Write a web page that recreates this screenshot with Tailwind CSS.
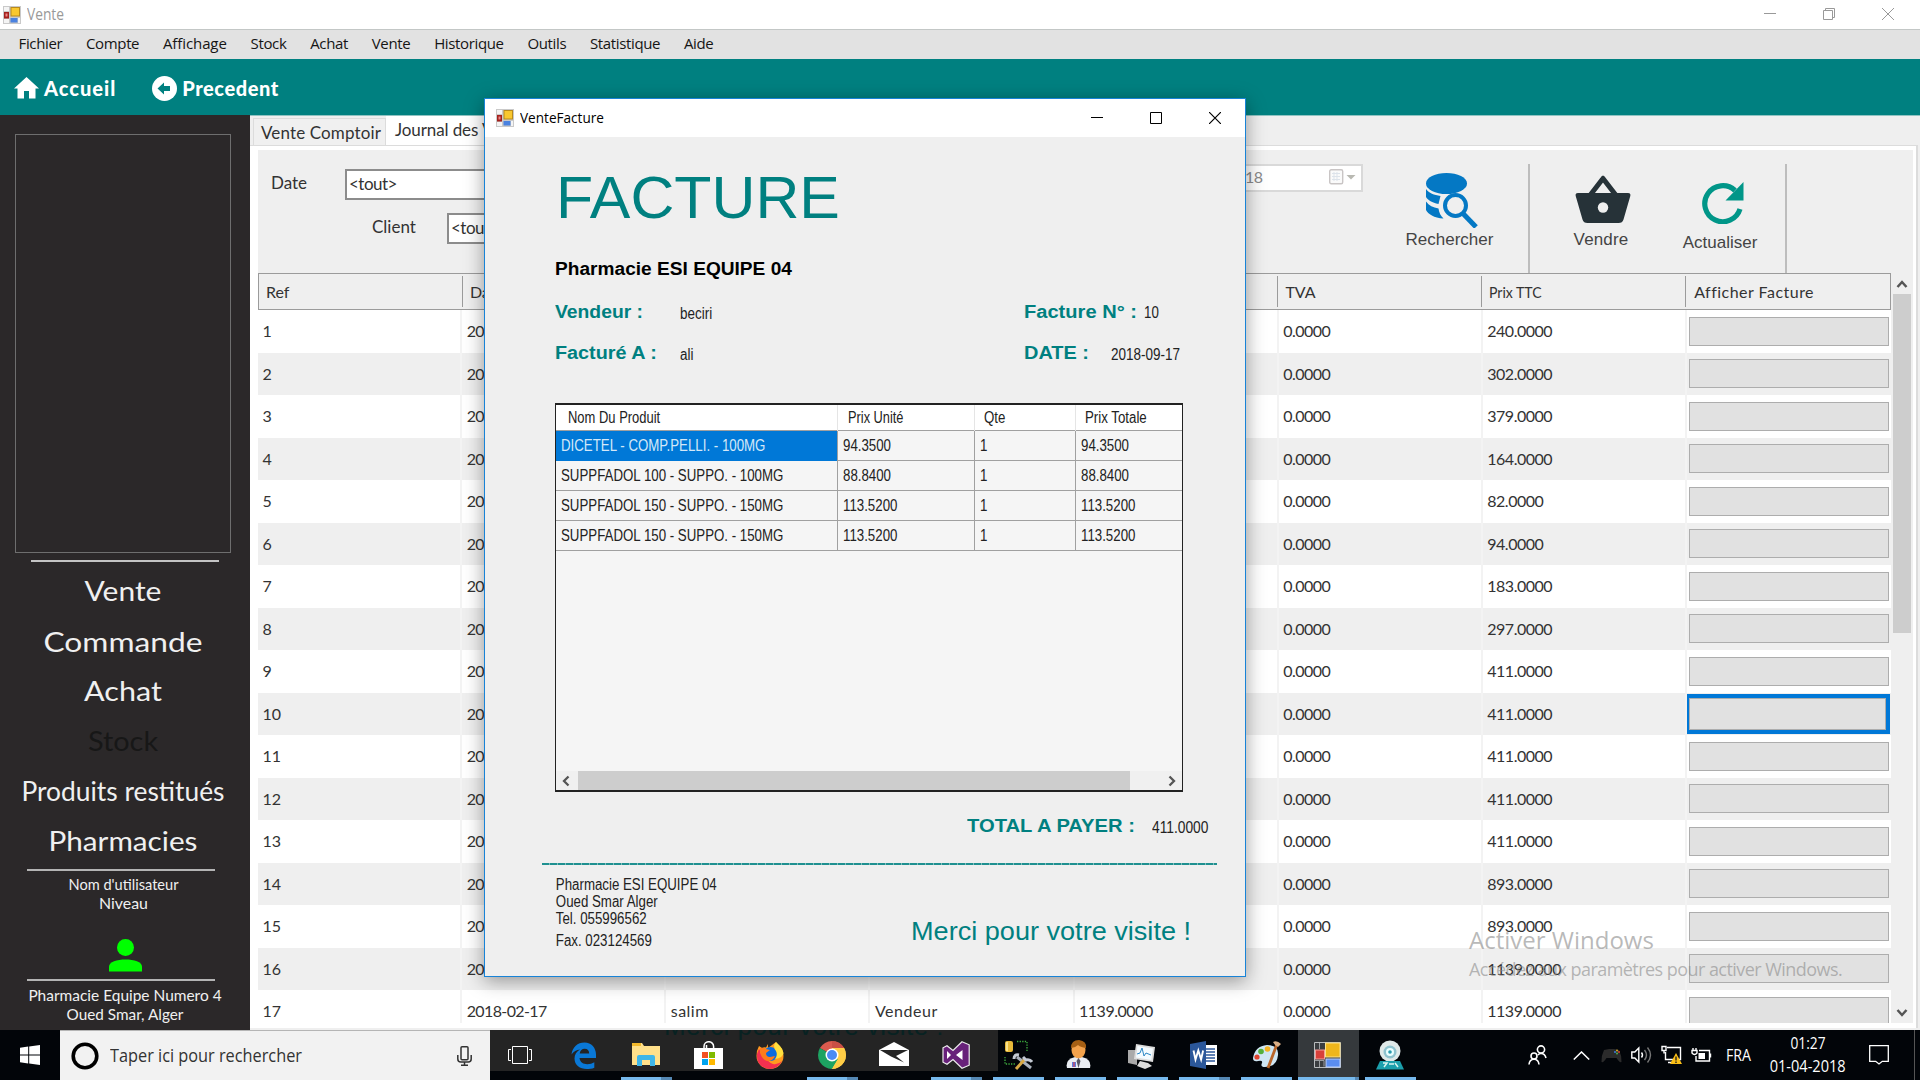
<!DOCTYPE html>
<html lang="fr">
<head>
<meta charset="utf-8">
<title>Vente</title>
<script src="https://cdn.jsdelivr.net/npm/@tailwindcss/browser@4"></script>
</head>
<body class="relative w-[1920px] h-[1080px] overflow-hidden bg-white font-['Lato',sans-serif] text-[#333] whitespace-nowrap">

<svg class="hidden">
  <symbol id="app" viewBox="0 0 18 18">
    <rect width="18" height="18" fill="#c9c9c9"/>
    <path d="M1 1h5v4H1zM1 13h5v4H1zM15 12h2v5h-2z" fill="#f4f4f4"/>
    <rect x="7.5" y="1" width="9.500" height="9.500" fill="#b98a1c"/><rect x="8.500" y="2" width="7.500" height="7.500" fill="#f9c82f"/>
    <rect x="1" y="6" width="5" height="6.500" fill="#a3201c"/><rect x="2.500" y="7.500" width="2" height="3" fill="#e88"/>
    <rect x="7.500" y="12" width="7" height="4.500" fill="#4a82e0"/>
  </symbol>
</svg>

<div class="flex flex-col h-full">
  <!-- title bar -->
  <header class="flex items-center h-[29px] pl-[3px] pr-[26px] bg-white">
    <svg class="size-[18px]"><use href="#app"/></svg>
    <span class="ml-[6px] origin-left scale-x-[.86] text-[16px] leading-[22px] pb-px font-['Open_Sans',sans-serif] text-[#999]">Vente</span>
    <div class="flex items-center gap-[47px] ml-auto pb-px text-[#999]">
      <svg class="w-3 h-3" viewBox="0 0 12 12" stroke="currentColor"><path d="M0 5.500h12"/></svg>
      <svg class="w-3 h-3" viewBox="0 0 12 12" fill="none" stroke="currentColor"><path d="M.5 2.500h9v9h-9zM2.500 2V.5h9v9H10"/></svg>
      <svg class="w-3 h-3" viewBox="0 0 12 12" stroke="currentColor"><path d="M0 0l12 12M12 0L0 12"/></svg>
    </div>
  </header>

  <!-- menu -->
  <nav class="flex items-center h-[30px] pb-[2px] pl-[18.500px] gap-[23.800px] border-t border-[#c3c7c6] bg-[#e2e2e2] text-[15px] tracking-[-.36px] text-[#151515] font-['Open_Sans',sans-serif]">
    <span>Fichier</span><span>Compte</span><span class="tracking-[-.1px]">Affichage</span><span>Stock</span><span>Achat</span><span>Vente</span><span>Historique</span><span>Outils</span><span>Statistique</span><span>Aide</span>
  </nav>

  <!-- navigation -->
  <div class="flex items-center h-14 pt-[2px] pl-[14px] bg-[#008080] text-white font-black text-[20px]">
    <svg class="w-[25px] h-[22px]" viewBox="0 0 25 22" fill="#fff"><path d="M12.500 0L25 11.500h-3.500V21.500h-6.500v-7.500h-5v7.500H3.500V11.500H0z"/></svg>
    <span class="ml-[5px] tracking-[1px]">Accueil</span>
    <svg class="ml-[36px] size-[25px]" viewBox="0 0 25 25"><circle cx="12.500" cy="12.500" r="12.500" fill="#fff"/><path d="M5.500 12.500l6.500-6v3.500h6v5h-6v3.500z" fill="#008080"/></svg>
    <span class="ml-[5px] tracking-[.55px]">Precedent</span>
  </div>

  <div class="flex h-[915px]">
    <!-- sidebar -->
    <aside class="w-[250px] shrink-0 pt-[19px] bg-[#2b2829] text-center text-[#f0f0f0]">
      <div class="ml-[15px] w-[216px] h-[419px] border border-[#6e6e6e]"></div>
      <div class="mt-[7px] ml-[31px] w-[188px] h-[2px] bg-[#c4c4c4]"></div>
      <div class="mt-1 pr-1 text-[27px] leading-[50px]">
        <p class="scale-x-[1.11]">Vente</p>
        <p class="scale-x-[1.175] pt-px -mb-px">Commande</p>
        <p class="scale-x-[1.13]">Achat</p>
        <p class="scale-x-[1.07] text-[#171717]">Stock</p>
        <p class="scale-x-[.976]">Produits restitués</p>
        <p class="scale-x-[1.1]">Pharmacies</p>
      </div>
      <div class="mt-[3px] ml-[27px] w-[188px] h-[2px] bg-[#b4b4b4]"></div>
      <div class="mt-[4px] pr-[3px] text-[15px] leading-[19px]">
        <p class="scale-x-[.973]">Nom d'utilisateur</p>
        <p class="scale-x-[1.06]">Niveau</p>
      </div>
      <svg class="mt-[26px] ml-[108.500px] w-[33px] h-[33px]" viewBox="0 0 33 33" fill="#00ff00"><circle cx="16.500" cy="8.500" r="8.500"/><path d="M0 32.500v-5C0 23 8 20.500 16.500 20.500S33 23 33 27.500v5z"/></svg>
      <div class="mt-[7px] ml-[27px] w-[188px] h-[2px] bg-[#b4b4b4]"></div>
      <div class="mt-[5px] text-[15px] leading-[19px]">
        <p class="scale-x-[1.03]">Pharmacie Equipe Numero 4</p>
        <p class="scale-x-[1.02]">Oued Smar, Alger</p>
      </div>
    </aside>

    <!-- tabs and their page -->
    <main class="flex flex-col w-[1670px] bg-[#efefef]">
      <div class="flex h-[30px] shrink-0 text-[17px] border-t border-[#8fc3c2]">
        <div class="mt-[2px] ml-[3px] w-[133px] h-7 pl-[7px] leading-[27px] border border-[#dcdcdc] bg-[#f0f0f0] tracking-[.13px]">Vente Comptoir</div>
        <div class="w-[98px] h-8 pl-[9px] leading-[28px] bg-white tracking-[-.1px]">Journal des V</div>
      </div>
      <div class="flex flex-col h-[883px] mr-[2px] pl-[8px] pr-[3px] pt-1 pb-[5px] border-t border-r-2 border-[#dcdcdc] bg-white">
        <div class="flex flex-col h-[873px] bg-[#efefef]">
          <!-- filters -->
          <div class="flex h-[123px] shrink-0 text-[17px]">
            <div class="w-[226px] pl-[13px] pt-[19px]">
              <div class="flex h-[31px] items-center">
                <span class="w-[74px] shrink-0 leading-[26px] pb-[3px]">Date</span>
                <div class="grow h-full pl-[2px] leading-[26px] border-2 border-r-0 border-[#8c8c8c] bg-white tracking-[-.5px]">&lt;tout&gt;</div>
              </div>
              <div class="flex h-[31px] mt-[13px] pl-[101px] items-center">
                <span class="w-[75px] shrink-0 leading-[26px] pb-[3px]">Client</span>
                <div class="grow h-full pl-[2px] leading-[26px] border-2 border-r-0 border-[#8c8c8c] bg-white tracking-[-.5px]">&lt;tou</div>
              </div>
            </div>
            <div class="flex items-center ml-[736px] mt-[14px] w-[143px] h-7 pb-[2px] pl-[23px] pr-[4px] border-2 border-[#d9d9d9] bg-white text-[16px] tracking-[-.5px] text-[#8a8a8a]">18
              <svg class="ml-auto w-[28px] h-[16px]" viewBox="0 0 28 16"><rect x=".7" y=".7" width="13" height="14" rx="1.500" fill="#fafafa" stroke="#c9c5c5" stroke-width="1.400"/><path d="M3 4.500h8M3 7.500h8M3 10.500h8M5 3v9M8 3v9" stroke="#dde3ea"/><path d="M17.500 6h9l-4.500 4.500z" fill="#b9b9b2"/></svg>
            </div>
            <div class="flex flex-col items-center ml-[25px] mt-[14px] w-[142px] pt-[8px] border-r-2 border-[#bdbdbd] pr-[17px] font-['Liberation_Sans',sans-serif] text-[#444]">
              <svg class="ml-[5px] w-[52px] h-[56px]" viewBox="0 0 52 56" fill="#0478c4"><ellipse cx="20.500" cy="11.500" rx="20.500" ry="10.500"/><path d="M0 17c3 4 8 6 14.500 7l-2 8C6 30.500 2 28.500 0 25z"/><path d="M0 29.500c3 4 7 6 12.500 7 .5 4 2 7 5 10C8 46 2 42 0 38z"/><circle cx="29.500" cy="33.500" r="10.500" fill="#efefef" stroke="#0478c4" stroke-width="4"/><path d="M36.500 41l13.500 14" stroke="#0478c4" stroke-width="5"/></svg>
              <span class="mt-px leading-[22px]">Rechercher</span>
            </div>
            <div class="flex mt-[14px] w-[257px] border-r-2 border-[#bdbdbd] font-['Liberation_Sans',sans-serif] text-[#444]">
              <div class="flex flex-col items-center ml-[40px] w-[62px] pt-[11px]">
                <svg class="w-[56px] h-[48px] ml-[4px]" viewBox="0 0 56 48"><path d="M28 3.500L14.500 21M28 3.500L41.500 21" stroke="#263238" stroke-width="5" stroke-linecap="round"/><path d="M3 18h50q3 0 2.300 3L48.500 44.500q-1 3.500-5 3.500h-31q-4 0-5-3.500L.7 21Q0 18 3 18z" fill="#263238"/><circle cx="28" cy="32.500" r="5.200" fill="#efefef"/></svg>
                <span class="mt-[6px] leading-[22px] tracking-[.15px]">Vendre</span>
              </div>
              <div class="flex flex-col items-center ml-[48px] w-[80px] pt-[18px]">
                <svg class="w-[42px] h-[42px] ml-[6px]" viewBox="0 0 42 42" fill="none"><path d="M33 8.500A18 18 0 1 0 38 27" stroke="#009688" stroke-width="5.200"/><path d="M41.500 0v18.500H23.500z" fill="#009688"/></svg>
                <span class="mt-[8px] leading-[22px]">Actualiser</span>
              </div>
            </div>
          </div>

          <!-- sales grid -->
          <div class="flex h-[750px]">
            <div class="w-[1633px] shrink-0 overflow-hidden">
              <div id="head" class="grid grid-cols-8 h-[37px] border border-[#9b9b9b] text-[16px]"></div>
              <div id="rows" class="h-[713px] overflow-hidden text-[16px]"></div>
            </div>
            <div class="flex flex-col items-center w-[20px] ml-[1px] pt-[7px] pb-[6px]">
              <svg class="w-[12px] h-[8px] shrink-0" viewBox="0 0 12 8" fill="none" stroke="#555" stroke-width="2.500"><path d="M1.500 7L6 2l4.500 5"/></svg>
              <div class="mt-[6px] w-[18px] h-[339px] bg-[#cdcdcd]"></div>
              <svg class="mt-auto w-[12px] h-[8px] shrink-0" viewBox="0 0 12 8" fill="none" stroke="#555" stroke-width="2.500"><path d="M1.500 1L6 6l4.500-5"/></svg>
            </div>
          </div>
        </div>
      </div>
    </main>
  </div>

  <!-- taskbar -->
  <footer class="relative flex h-[50px] bg-[#020509] text-white overflow-hidden font-['Open_Sans',sans-serif]">
    <div class="flex items-center justify-center w-[60px]">
      <svg class="w-5 h-5" viewBox="0 0 20 20" fill="#fff"><path d="M0 2.700l8.200-1.200v8H0zM9.200 1.400L20 0v9.500H9.200zM0 10.500h8.200v8L0 17.300zM9.200 10.500H20V20L9.200 18.600z"/></svg>
    </div>
    <div class="flex items-center w-[430px] pl-[11px] pr-[18px] border-t border-[#b5b5b5] bg-[#f2f2f2]">
      <svg class="w-7 h-7" viewBox="0 0 28 28"><circle cx="14" cy="14" r="11.800" fill="none" stroke="#000" stroke-width="3.600"/></svg>
      <span class="ml-[11px] text-[18px] origin-left scale-x-[.905] text-[#333]">Taper ici pour rechercher</span>
      <svg class="ml-auto w-[15px] h-5" viewBox="0 0 15 20" fill="none" stroke="#333" stroke-width="1.500"><rect x="4" y=".8" width="7" height="13" rx="1"/><path d="M.8 9v4q0 3 3 3h7.400q3 0 3-3V9M7.500 16v3M4 19.200h7"/></svg>
    </div>
    <div class="relative flex w-[508px] shrink-0 h-[41px] bg-[#242424]">
      <span class="absolute left-[174px] top-[-19px] text-[26px] leading-[30px] tracking-[.45px] text-[#082222] font-['Liberation_Sans',sans-serif]">Merci pour votre visite !</span>
      <div class="relative flex">
        <div class="flex justify-center w-[63px] h-[50px] pt-[15px] pr-[3px]"><svg class="w-6 h-5" viewBox="0 0 24 20" fill="none" stroke="#fff"><path d="M4.500 1.500h15v17h-15zM3 4.500H.5v11H3M21 4.500h2.500v11H21"/></svg></div>
        <div class="flex justify-center w-[62px] h-[50px] pt-[12px]"><svg class="w-[26px] h-[27px]" viewBox="0 0 26 27"><path d="M.5 12.500C1.500 5 6.500.5 13.500.5 20.500.5 25 6 25 12.500v3.500H8.500c.5 4.500 4 6.200 7.800 6.200 2.700 0 5-.7 7-2v5.500c-2.300 1-5 1.300-7.600 1.300C9 27 3.500 23 3.500 16.500c0-4 2-7 5.500-9C5.500 8 2.500 9.500.5 12.500zM8.700 11.500h9.500c0-3-1.700-4.700-4.600-4.700-2.600 0-4.500 1.700-4.900 4.700z" fill="#0a78d6"/></svg></div>
        <div class="flex justify-center w-[62px] h-[50px] pt-[13px]"><svg class="w-7 h-6" viewBox="0 0 28 24"><path d="M0 0h10l2 3h16v19H0z" fill="#ffe08a"/><path d="M0 0h9v3H0z" fill="#f3b92c"/><path d="M5 23V14q0-2 2-2h14q2 0 2 2v9h-5v-6h-8v6z" fill="#3fb6e8"/></svg></div>
        <div class="flex justify-center w-[62px] h-[50px] pt-[11px]"><svg class="w-[29px] h-[28px]" viewBox="0 0 29 28"><path d="M10 8V5.500a4.800 4.800 0 0 1 9.600 0V8M12.500 8V4" stroke="#fff" stroke-width="1.500" fill="none"/><path d="M0 7h29v21H0z" fill="#fff"/><path d="M8 11h6v6H8z" fill="#f25022"/><path d="M15 11h6v6h-6z" fill="#7fba00"/><path d="M8 18h6v6H8z" fill="#00a4ef"/><path d="M15 18h6v6h-6z" fill="#ffb900"/></svg></div>
        <div class="flex justify-center w-[62px] h-[50px] pt-[11px]"><svg class="w-7 h-7" viewBox="0 0 28 28"><path d="M3 5l3 2q2-1 4-.5L12 3v4l8-6q1.500 2 3.500 4 4 4 4 10a13.500 13 0 0 1-27 0Q.5 9 3 5z" fill="#ff9a1f"/><path d="M1 13Q0 26 13 28q9 0 13-8-4 4-9 3T3 8z" fill="#f3304f"/><circle cx="14.500" cy="13" r="7" fill="#0a6be0"/><path d="M20 1q-4 4 0 9 2 4-1 8 8-1 8.500-6Q27 8 24 5z" fill="#ffdf3e"/><path d="M4 7q4-1 6 1l4 1-4 3q0 4 4 4l5-1q-2 5-7 5T4 12z" fill="#ff7c1a"/></svg></div>
        <div class="flex justify-center w-[62px] h-[50px] pt-[11px]"><svg class="w-7 h-7" viewBox="0 0 28 28"><path d="M14 14L1.900 7A14 14 0 0 1 26.100 7z" fill="#db5a4e"/><path d="M14 14V0A14 14 0 0 1 26.100 7z" fill="#c94f45"/><path d="M14 14L1.900 7A14 14 0 0 0 14 28z" fill="#1da362"/><path d="M14 14h-2l2 14A14 14 0 0 0 26.100 7H14z" fill="#ffcd46"/><path d="M7 17L14 28l6-10z" fill="#1da362"/><path d="M14 28l6-10 4-11h2.100A14 14 0 0 1 14 28z" fill="#ffcd46"/><circle cx="14" cy="14" r="6.500" fill="#fff"/><circle cx="14" cy="14" r="5" fill="#4a8af4"/></svg></div>
        <div class="flex justify-center w-[62px] h-[50px] pt-[12px]"><svg class="w-[30px] h-6" viewBox="0 0 30 24"><path d="M0 8L15 0l15 8v16H0z" fill="#fff"/><path d="M1 8h28l-12 6 8 6.500L12 14.500z" fill="#242424"/></svg></div>
        <div class="flex justify-center w-[62px] h-[50px] pt-[11px]"><svg class="w-7 h-7" viewBox="0 0 28 28"><path d="M20 .8l7.200 3v20.400l-7.200 3-9-8.700-6 4.700-4-2V6.800l4-2 6 4.700z" fill="#68217a" stroke="#eee" stroke-width="1.200"/><path d="M5 10v8l4-4zM20.500 9v10L14 14z" fill="#fff"/></svg></div>
      </div>
    </div>
    <div class="flex">
      <div class="flex justify-center w-[41px] pt-[10px]"><svg class="w-[29px] h-[30px]" viewBox="0 0 29 30"><rect x="1" y="1" width="8" height="11" rx="2" fill="#e7b93a"/><path d="M3 2v9" stroke="#fff0a8" stroke-width="1.500"/><path d="M13 1.500h10v10M1 17v7h11" fill="none" stroke="#3fae3f" stroke-width="1.300" stroke-dasharray="1.300 1.300"/><path d="M13 17l14 11" stroke="#a9b0bb" stroke-width="3"/><path d="M10 19q0-5 5-4" stroke="#c4cad4" stroke-width="3" fill="none"/><path d="M12 29l9-10" stroke="#d9a945" stroke-width="3"/><path d="M19 17l3 3q4-1 6 2" stroke="#c4cad4" stroke-width="3" fill="none"/></svg></div>
      <div class="flex justify-center w-[82px] pt-[10px] pr-[3px]"><svg class="w-[25px] h-[29px]" viewBox="0 0 25 29"><path d="M1 28q-2-9 8-11h7q10 2 8 11z" fill="#e9ecf2"/><ellipse cx="12.500" cy="10" rx="7" ry="8.500" fill="#f3a24c"/><path d="M5 8Q5 0 13 0q8 1 7 8-6-1-8-3-3 3-7 3z" fill="#a55f14"/><path d="M12.500 18l-2 3 2 7 2-7z" fill="#556"/><path d="M6 22h4v5H6z" fill="#5b7de0"/><path d="M8 22v5" stroke="#e33"/></svg></div>
      <div class="flex justify-center w-[42px] pt-[14px] pr-[3px]"><svg class="w-[28px] h-[25px]" viewBox="0 0 28 25"><path d="M1 6h9v15l-9-2z" fill="#aaa"/><path d="M9 0l19 3-2 15-19-3z" fill="#dcdcdc"/><path d="M10.500 2l15.500 2.500-1.700 11.500L9 13.500z" fill="#f4fbff"/><path d="M10 10l3-1 2-5 2 8 2-3 5 2" stroke="#2a86c4" fill="none"/><path d="M13 17l8 2 4 3-7 3-8-3z" fill="#ddd"/></svg></div>
      <div class="flex justify-center w-[82px] pt-[11px]"><svg class="w-[28px] h-[28px]" viewBox="0 0 28 28"><path d="M14 4h13v20H14z" fill="#fff"/><path d="M16 8h9M16 11h9M16 14h9M16 17h9M16 20h9" stroke="#2b579a" stroke-width="1.300"/><path d="M0 3l16-3v28L0 25z" fill="#2b579a"/><path d="M3.500 9.500l2 9 2.800-9 2.800 9 2-9" stroke="#fff" stroke-width="1.900" fill="none"/></svg></div>
      <div class="flex justify-center w-[42px] pt-[10px]"><svg class="w-[30px] h-[30px]" viewBox="0 0 30 30"><path d="M2 18Q4 6 16 5q12 0 11 10-1 12-13 12-5 0-3-4 1-3-4-2-5 1-5-3z" fill="#cfe6f4"/><circle cx="6" cy="17" r="2.600" fill="#e2452f"/><circle cx="10" cy="11.500" r="2.800" fill="#54b03c"/><circle cx="16.500" cy="9" r="2.800" fill="#f5b324"/><path d="M26 4L17 28" stroke="#b8652a" stroke-width="2.800"/><path d="M22 2q4-2 8 2l-3 3q-3-1-5-5z" fill="#d9ae86"/></svg></div>
      <div class="flex justify-center w-[61px] ml-[11px] pt-[12px] pr-[2px] bg-[#35393c]"><svg class="w-[27px] h-[26px]" viewBox="0 0 27 26"><path d="M.5.5h26v25H.5z" fill="#3a3d40" stroke="#b9bcbe"/><rect x="11.500" y="1" width="14.500" height="14" fill="#efb61c" stroke="#fbe28b"/><rect x="1.500" y="8" width="9" height="9" fill="#d9403a" stroke="#f2a09b"/><rect x="12" y="17" width="14" height="8" fill="#5a8df0" stroke="#bcd0fa"/><path d="M5.500 1v6M5.500 18v7M1 18.500h9v6" stroke="#9a9da0" fill="none"/></svg></div>
      <div class="flex justify-center w-[62px] pt-[10px]"><svg class="w-[30px] h-[30px]" viewBox="0 0 30 30"><circle cx="15" cy="11" r="10.500" fill="#dfe9e8"/><circle cx="15" cy="12" r="6.500" fill="#8fc4cf"/><circle cx="15" cy="12" r="4" fill="#eaffff"/><circle cx="15" cy="12" r="1.800" fill="#2a9cae"/><path d="M5 21h20l4 8.500H1z" fill="#1b9fac"/><path d="M8 23h4l-3 4M14 24h5M20 23l3 4" stroke="#d6f4f0" stroke-width="1.500" fill="none"/></svg></div>
    </div>
    <!-- running indicators -->
    <div class="absolute left-[621px] bottom-0 flex h-[3px]">
      <i class="w-10 bg-[#76b9ed]"></i><i class="w-[11px] bg-[#5588b4]"></i>
      <i class="ml-[135px] w-10 bg-[#76b9ed]"></i><i class="w-[11px] bg-[#5588b4]"></i>
      <i class="ml-[73px] w-10 bg-[#76b9ed]"></i><i class="w-[11px] bg-[#5588b4]"></i>
      <i class="ml-[11px] w-[51px] bg-[#76b9ed]"></i><i class="ml-[11px] w-[51px] bg-[#76b9ed]"></i><i class="ml-[11px] w-[51px] bg-[#76b9ed]"></i>
      <i class="ml-[11px] w-10 bg-[#76b9ed]"></i><i class="w-[11px] bg-[#5588b4]"></i>
      <i class="ml-[11px] w-[51px] bg-[#76b9ed]"></i>
      <i class="ml-[6px] w-[57px] bg-[#76b9ed]"></i><i class="w-[4px] bg-[#5588b4]"></i>
      <i class="ml-[6px] w-[51px] bg-[#76b9ed]"></i>
    </div>
    <!-- tray -->
    <div class="flex items-center ml-auto h-full pr-[5px] text-[16px]">
      <svg class="w-[19px] h-5" viewBox="0 0 19 20" fill="none" stroke="#fff" stroke-width="1.600"><circle cx="13" cy="4.500" r="3.600"/><path d="M18 13q-1-4.500-5-4.500-2 0-3 1.500"/><circle cx="6" cy="11" r="3"/><path d="M1 19.500q.5-5.300 5-5.300t5 5.300"/></svg>
      <svg class="ml-[26px] w-[17px] h-[9px]" viewBox="0 0 17 9" fill="none" stroke="#fff" stroke-width="1.500"><path d="M.8 8.500l7.700-7.500 7.700 7.500"/></svg>
      <svg class="ml-[11px] w-[21px] h-[15px]" viewBox="0 0 21 15"><path d="M3 2l5-1h5l5 1q3 6 2.500 12-2 1-5-4h-10q-3 5-5 4Q0 8 3 2z" fill="#2b2b2b"/><circle cx="14" cy="4" r="1" fill="#3b7de0"/><circle cx="16" cy="2.500" r="1" fill="#e0b020"/><circle cx="18" cy="4" r="1" fill="#d84030"/><circle cx="16" cy="5.500" r="1" fill="#4caf50"/></svg>
      <svg class="ml-[9px] w-[21px] h-[18px]" viewBox="0 0 21 18" fill="none" stroke="#fff" stroke-width="1.400"><path d="M.8 6h3l4-4v14l-4-4h-3z"/><path d="M10.500 6.500q2 2.500 0 5"/><path d="M13.500 4q4 5 0 10M16.500 1.500q6 7.500 0 15" stroke="#777"/></svg>
      <svg class="ml-[9px] w-[21px] h-5" viewBox="0 0 21 20" fill="none" stroke="#fff" stroke-width="1.400"><path d="M6 2.500h13.500v12H4.500V7M1 1.500h4v4H1zM3 5.500v3M7 17.500h5"/><path d="M15 8l6 11H9z" fill="#fbbf16" stroke="none"/><path d="M15 11.500v4M15 16.500v1.500" stroke="#222"/></svg>
      <svg class="ml-[9px] w-[21px] h-[16px]" viewBox="0 0 21 16" fill="none" stroke="#fff" stroke-width="1.400"><path d="M8 3.500h10.500v10.500H5V9M19.500 6.500v4"/><path d="M7.500 6h6.500v6H7.500z" fill="#fff" stroke="none"/><path d="M1 3.500h5v2.500q-2.500 3-5 0zM2 1v2M5 1v2"/></svg>
      <span class="ml-[14px] w-[25px]"><span class="inline-block origin-left scale-x-[.885]">FRA</span></span>
      <div class="ml-[18px] w-[78px] text-center leading-[23px]">
        <p class="scale-x-[.86]">01:27</p><p class="ml-[-3px] scale-x-[.91]">01-04-2018</p>
      </div>
      <svg class="ml-[22px] w-5 h-5" viewBox="0 0 20 20" fill="none" stroke="#fff" stroke-width="1.300"><path d="M.7.700h18.600v15.600h-6L10 19l-3.300-2.700h-6z"/></svg>
      <i class="ml-[25px] w-px h-[50px] bg-[#555]"></i>
    </div>
  </footer>
</div>

<!-- activation watermark -->
<div class="absolute left-[1469px] top-[923px] text-[#8a8a8a]/60 font-['Open_Sans',sans-serif]">
  <p class="text-[24px] leading-[33px]">Activer Windows</p>
  <p class="text-[18px] leading-[26px] tracking-[-.55px]">Accédez aux paramètres pour activer Windows.</p>
</div>

<!-- invoice window -->
<section class="absolute left-[484px] top-[98px] w-[762px] h-[879px] border border-[#1883d7] bg-[#efefef] text-[16px] text-[#222] shadow-[0_4px_18px_rgba(0,0,0,.38)] font-['Liberation_Sans',sans-serif]">
  <div class="flex items-center h-[38px] pl-[11px] pr-[24px] bg-white">
    <svg class="size-[18px]"><use href="#app"/></svg>
    <span class="ml-[6px] pb-[2px] origin-left scale-x-[.906] text-[15px] text-black font-['Open_Sans',sans-serif]">VenteFacture</span>
    <div class="flex items-center gap-[47px] ml-auto text-black">
      <svg class="w-3 h-3" viewBox="0 0 12 12" stroke="currentColor"><path d="M0 5.500h12"/></svg>
      <svg class="w-3 h-3" viewBox="0 0 12 12" fill="none" stroke="currentColor"><path d="M.5.500h11v11H.5z"/></svg>
      <svg class="w-3 h-3" viewBox="0 0 12 12" stroke="currentColor" stroke-width="1.200"><path d="M0 0l12 12M12 0L0 12"/></svg>
    </div>
  </div>
  <div class="pl-[70px] pt-[31px]">
    <h1 class="pl-px text-[60px] leading-[60px] origin-left scale-x-[1.014] text-[#008080]">FACTURE</h1>
    <p class="mt-[29px] h-6 leading-6 font-bold text-[18px] text-black origin-left scale-x-[1.062]">Pharmacie ESI EQUIPE 04</p>
    <div class="grid grid-cols-[125px_344px_auto] mt-[19px] h-6 leading-6">
      <b class="text-[18px] origin-left scale-x-[1.073] text-[#008080]">Vendeur :</b>
      <span class="pt-[2px] origin-left scale-x-[.84]">beciri</span>
      <div class="flex"><b class="w-[120px] text-[18px] origin-left scale-x-[1.116] text-[#008080]">Facture N° :</b><span class="pt-px origin-left scale-x-[.83]">10</span></div>
    </div>
    <div class="grid grid-cols-[125px_344px_auto] mt-[17px] h-6 leading-6">
      <b class="text-[18px] origin-left scale-x-[1.1] text-[#008080]">Facturé A :</b>
      <span class="pt-[2px] origin-left scale-x-[.84]">ali</span>
      <div class="flex"><b class="w-[87px] text-[18px] origin-left scale-x-[1.108] text-[#008080]">DATE :</b><span class="pt-[2px] origin-left scale-x-[.843]">2018-09-17</span></div>
    </div>
    <div class="flex flex-col mt-[38px] w-[628px] h-[389px] border border-t-2 border-b-2 border-[#222] bg-[#f5f5f5]">
      <div class="grid grid-cols-[282px_137px_101px_auto] h-[26px] leading-[26px] bg-white border-b border-[#a0a0a0]">
        <div class="pl-[12px] border-r border-[#e5e5e5]"><p class="origin-left scale-x-[.81]">Nom Du Produit</p></div>
        <div class="pl-[10px] border-r border-[#e5e5e5]"><p class="origin-left scale-x-[.8]">Prix Unité</p></div>
        <div class="pl-[9px] border-r border-[#e5e5e5]"><p class="origin-left scale-x-[.83]">Qte</p></div>
        <div class="pl-[9px]"><p class="origin-left scale-x-[.83]">Prix Totale</p></div>
      </div>
      <div id="items"></div>
      <div class="flex items-center mt-auto h-[19px] bg-[#f0f0f0] px-[6px]">
        <svg class="w-[8px] h-[12px]" viewBox="0 0 8 12" fill="none" stroke="#555" stroke-width="2.300"><path d="M6.500 1.500L2 6l4.500 4.500"/></svg>
        <i class="ml-[8px] w-[552px] h-full bg-[#cdcdcd]"></i>
        <svg class="ml-auto w-[8px] h-[12px]" viewBox="0 0 8 12" fill="none" stroke="#555" stroke-width="2.300"><path d="M1.500 1.500L6 6l-4.500 4.500"/></svg>
      </div>
    </div>
    <div class="flex mt-[22px] pl-[412px] h-6 leading-6"><b class="w-[185px] text-[18px] origin-left scale-x-[1.122] text-[#008080]">TOTAL A PAYER :</b><span class="pt-[2px] origin-left scale-x-[.86]">411.0000</span></div>
    <div class="mt-[25px] ml-[-13px] w-[675px] h-[2px] bg-[repeating-linear-gradient(90deg,#1f9090_0_7px,#7fbdbd_7px_8px)]"></div>
    <div class="flex">
      <div class="w-[356px] pl-px mt-[12px] leading-[16.500px] origin-left scale-x-[.83]">
        <p>Pharmacie ESI EQUIPE 04</p><p>Oued Smar Alger</p><p class="pt-px -mb-px">Tel. 055996562</p><p class="mt-[6px]">Fax. 023124569</p>
      </div>
      <p class="mt-[51px] text-[26px] leading-[31px] origin-left scale-x-[1.042] text-[#008080]">Merci pour votre visite !</p>
    </div>
  </div>
</section>

<script>
const heads = ['Ref', 'Date', 'Client', 'Vendeur', 'Prix HT', 'TVA', 'Prix TTC', 'Afficher Facture'];
const headStyle = {'Prix TTC': 'origin-left scale-x-[.88]', 'Afficher Facture': 'pl-px tracking-[.48px]'};
document.getElementById('head').innerHTML = heads.map((h, i) =>
  `<div class="my-[2px] leading-[31px] pl-[7px] ${i < 7 ? 'border-r border-[#9b9b9b]' : ''}"><p class="${headStyle[h] || ''}">${h}</p></div>`).join('');

const totals = [240, 302, 379, 164, 82, 94, 183, 297, 411, 411, 411, 411, 411, 893, 893, 1139, 1139];
document.getElementById('rows').innerHTML = totals.map((t, i) => {
  const cells = [i + 1, '2018-02-17', 'salim', 'Vendeur', t + '.0000', '0.0000', t + '.0000'];
  const tracks = ['', 'tracking-[-.61px]', 'tracking-[.47px]', 'tracking-[.55px]', 'tracking-[-.48px]', 'tracking-[-.5px]', 'tracking-[-.48px]'];
  return `<div class="grid grid-cols-8 h-[42.5px] leading-[42.5px] ${i % 2 ? 'bg-[#efefef]' : 'bg-white'}">` +
    cells.map((c, k) => `<div class="pl-[4.5px] border-r-2 border-[#f3f3f3] ${tracks[k]}">${c}</div>`).join('') +
    (i === 9
      ? '<div class="my-[1px] mr-[1px] p-[4px] pl-[2px] bg-[#0078d7]"><div class="h-full border border-[#adadad] bg-[#e1e1e1]"></div></div>'
      : '<div class="pt-[6.5px] pl-[2px]"><div class="w-[200px] h-[29px] border border-[#adadad] bg-[#e1e1e1]"></div></div>') +
    '</div>';
}).join('');

const items = [
  ['DICETEL - COMP.PELLI. - 100MG', '94.3500'],
  ['SUPPFADOL 100 - SUPPO. - 100MG', '88.8400'],
  ['SUPPFADOL 150 - SUPPO. - 150MG', '113.5200'],
  ['SUPPFADOL 150 - SUPPO. - 150MG', '113.5200'],
];
const cell = (c, extra) => `<div class="pl-[5px] ${extra}"><p class="origin-left scale-x-[.83]">${c}</p></div>`;
document.getElementById('items').innerHTML = items.map(([n, p], i) =>
  `<div class="grid grid-cols-[282px_137px_101px_auto] h-[30px] leading-[30px] border-b border-[#a0a0a0]">` +
  cell(n, 'border-r border-[#a0a0a0]' + (i ? '' : ' bg-[#0078d7] text-[#d5e8f8]')) +
  cell(p, 'border-r border-[#a0a0a0]') + cell(1, 'border-r border-[#a0a0a0]') + cell(p, '') + '</div>').join('');
</script>
</body>
</html>
